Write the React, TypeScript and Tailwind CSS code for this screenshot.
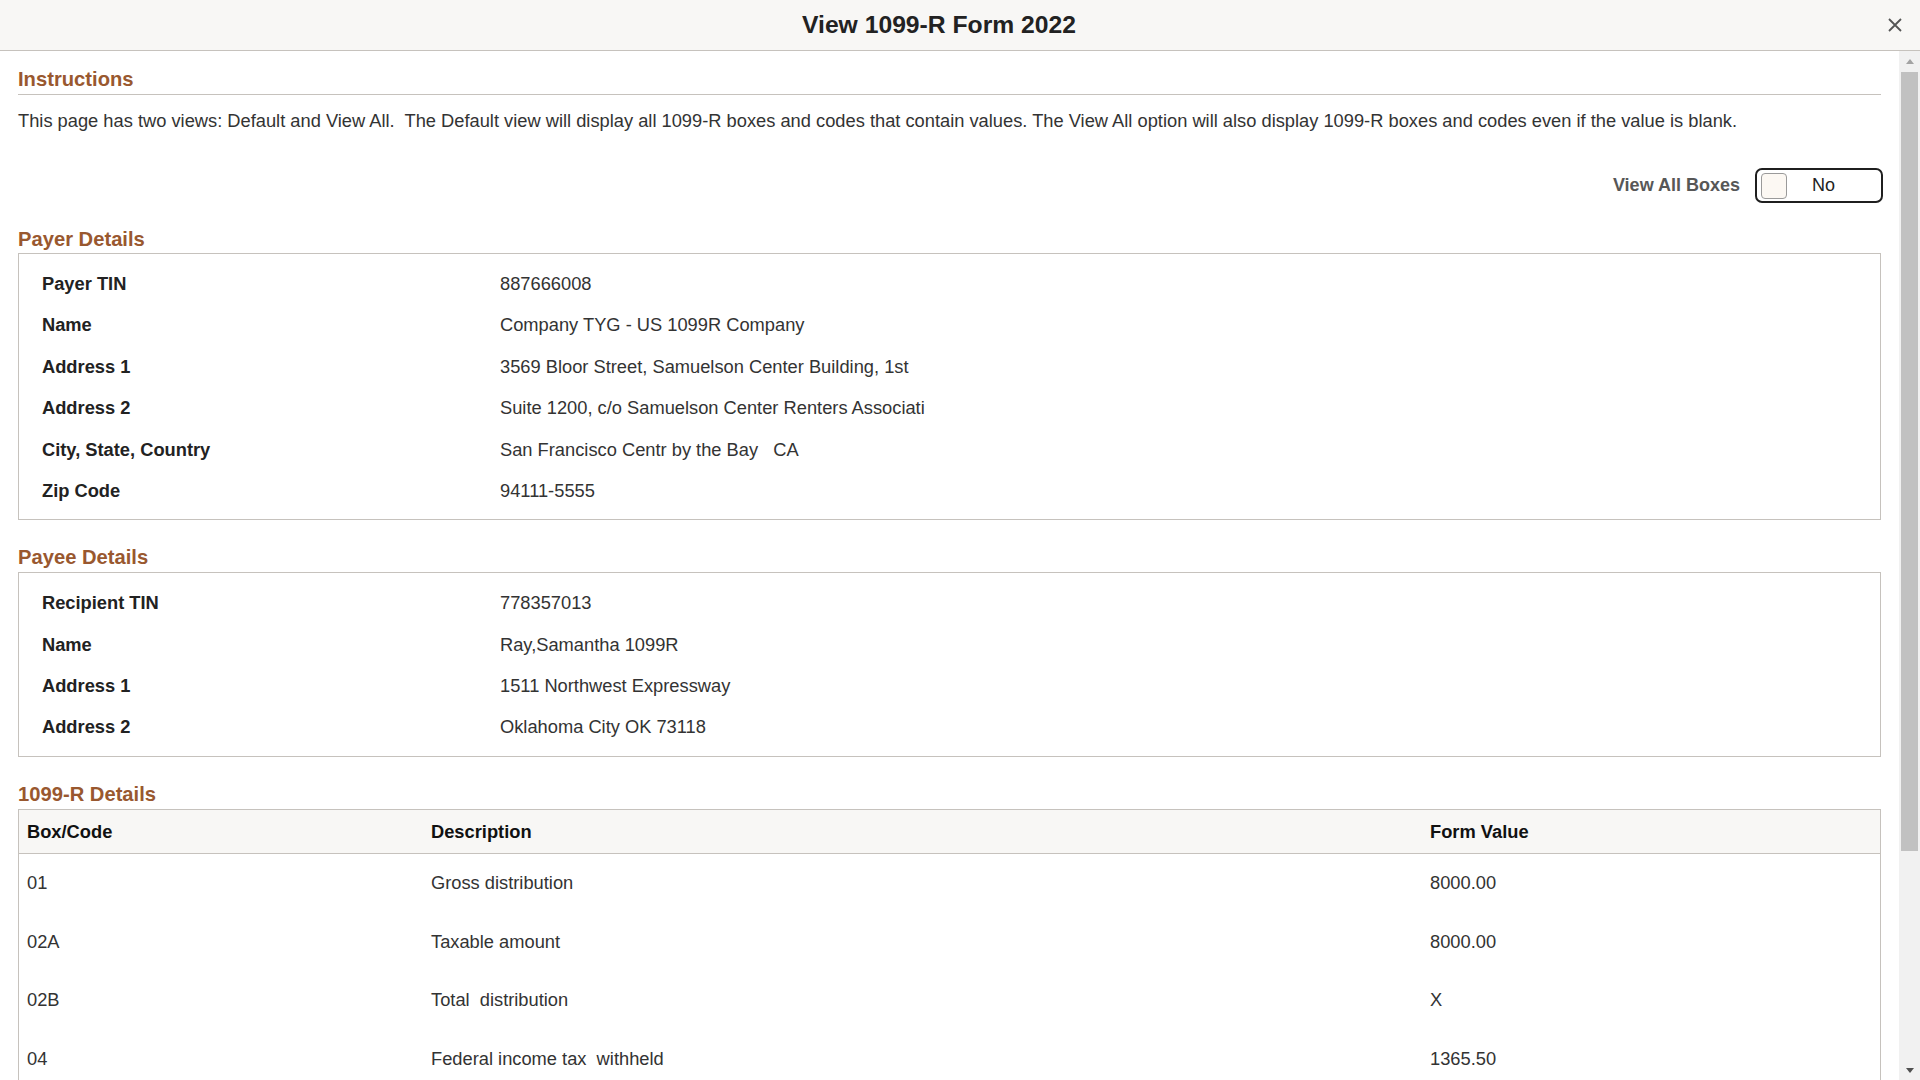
import React from 'react';

const payer = [
  { label: 'Payer TIN', value: '887666008' },
  { label: 'Name', value: 'Company TYG - US 1099R Company' },
  { label: 'Address 1', value: '3569 Bloor Street, Samuelson Center Building, 1st' },
  { label: 'Address 2', value: 'Suite 1200, c/o Samuelson Center Renters Associati' },
  { label: 'City, State, Country', value: 'San Francisco Centr by the Bay   CA' },
  { label: 'Zip Code', value: '94111-5555' },
];

const payee = [
  { label: 'Recipient TIN', value: '778357013' },
  { label: 'Name', value: 'Ray,Samantha 1099R' },
  { label: 'Address 1', value: '1511 Northwest Expressway' },
  { label: 'Address 2', value: 'Oklahoma City OK 73118' },
];

const boxes = [
  { code: '01', desc: 'Gross distribution', value: '8000.00' },
  { code: '02A', desc: 'Taxable amount', value: '8000.00' },
  { code: '02B', desc: 'Total  distribution', value: 'X' },
  { code: '04', desc: 'Federal income tax  withheld', value: '1365.50' },
];

const SectionTitle = ({ children, className = '' }: { children: React.ReactNode; className?: string }) => (
  <h2 className={`text-[20.2px] leading-[24px] font-bold text-[#99582f] ${className}`}>{children}</h2>
);

const DetailBox = ({ rows }: { rows: { label: string; value: string }[] }) => (
  <div className="border border-[#c6c2bd] pl-[23px] pt-[9px] pb-[8px]">
    {rows.map((r) => (
      <div key={r.label} className="grid grid-cols-[458px_1fr] items-center h-[41.4px] text-[18.3px]">
        <span className="font-bold text-[#222]">{r.label}</span>
        <span className="text-[#333] whitespace-pre">{r.value}</span>
      </div>
    ))}
  </div>
);

export default function App() {
  return (
    <div className="h-screen w-screen flex flex-col overflow-hidden bg-white font-['Liberation_Sans',Arial,sans-serif]">
      {/* modal header */}
      <div className="h-[51px] shrink-0 flex items-center bg-[#f8f7f5] border-b border-[#c6c2bd]">
        <div className="flex-1" />
        <h1 className="text-[24.7px] font-bold text-[#222]">View 1099-R Form 2022</h1>
        <div className="flex-1" />
        <div className="w-[42px] flex justify-end pr-[18px]">
          <button className="w-[14px] h-[14px] flex items-center justify-center" aria-label="Close">
            <svg width="14" height="14" viewBox="0 0 14 14">
              <path d="M1 1 L13 13 M13 1 L1 13" stroke="#555" strokeWidth="1.8" fill="none" />
            </svg>
          </button>
        </div>
      </div>

      <div className="flex-1 min-h-0 flex">
        <div className="flex-1 min-w-0 overflow-hidden px-[18px] pt-[16px]">
          <SectionTitle className="pb-[3px] border-b border-[#c6c2bd]">Instructions</SectionTitle>
          <p className="mt-[15px] text-[18.3px] leading-[22px] text-[#333] whitespace-pre-wrap">
            {'This page has two views: Default and View All.  The Default view will display all 1099-R boxes and codes that contain values. The View All option will also display 1099-R boxes and codes even if the value is blank.'}
          </p>

          <div className="mt-[36px] flex items-center justify-end gap-[15px] -mr-[2px]">
            <span className="text-[18px] font-bold text-[#575757]">View All Boxes</span>
            <div className="w-[128px] h-[35px] border-2 border-[#1f1f1f] rounded-[7px] flex items-center pl-[4px]">
              <div className="w-[26px] h-[26px] rounded-[4px] border border-[#9a9a9a] bg-[#fcf8f3]" />
              <span className="flex-1 text-center pr-[21px] text-[18px] text-[#222]">No</span>
            </div>
          </div>

          <SectionTitle className="mt-[24px] mb-[2px]">Payer Details</SectionTitle>
          <DetailBox rows={payer} />

          <SectionTitle className="mt-[25px] mb-[3px]">Payee Details</SectionTitle>
          <DetailBox rows={payee} />

          <SectionTitle className="mt-[25px] mb-[3px]">1099-R Details</SectionTitle>
          <div className="border-x border-t border-[#c6c2bd] text-[18.3px]">
            <div className="grid grid-cols-[404px_999px_1fr] h-[44px] items-center bg-[#f8f7f5] border-b border-[#c6c2bd] font-bold text-[#111]">
              <span className="px-[8px]">Box/Code</span>
              <span className="px-[8px]">Description</span>
              <span className="px-[8px]">Form Value</span>
            </div>
            {boxes.map((b) => (
              <div key={b.code} className="grid grid-cols-[404px_999px_1fr] h-[58.4px] items-center text-[#333]">
                <span className="px-[8px]">{b.code}</span>
                <span className="px-[8px] whitespace-pre">{b.desc}</span>
                <span className="px-[8px]">{b.value}</span>
              </div>
            ))}
          </div>
        </div>

        {/* scrollbar */}
        <div className="w-[21px] shrink-0 bg-[#f1f1f1] flex flex-col items-center">
          <div className="h-[20px] w-full flex items-center justify-center">
            <svg width="8" height="5" viewBox="0 0 8 5">
              <path d="M0 5 L4 0 L8 5 Z" fill="#a3a3a3" />
            </svg>
          </div>
          <div className="mt-[1px] w-[17px] h-[779px] bg-[#c1c1c1]" />
          <div className="flex-1" />
          <div className="h-[20px] w-full flex items-center justify-center">
            <svg width="8" height="5" viewBox="0 0 8 5">
              <path d="M0 0 L8 0 L4 5 Z" fill="#505050" />
            </svg>
          </div>
        </div>
      </div>
    </div>
  );
}
